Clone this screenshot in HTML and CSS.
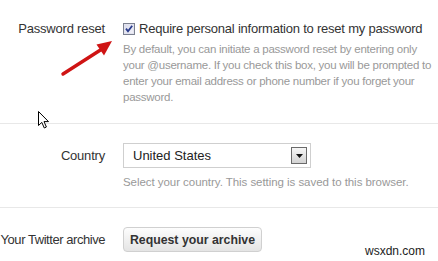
FILE: index.html
```html
<!DOCTYPE html>
<html>
<head>
<meta charset="utf-8">
<link rel="stylesheet" href="styles.css">
</head>
<body>
<div class="settings">
  <div class="row row-reset">
    <div class="label"><span>Password reset</span></div>
    <div class="field">
      <label class="check">
        <svg class="checkbox" width="12" height="12" viewBox="0 0 12 12">
          <defs>
            <linearGradient id="cbg" x1="0" y1="0" x2="1" y2="1">
              <stop offset="0" stop-color="#d6d8ea"/>
              <stop offset="1" stop-color="#f4f4fb"/>
            </linearGradient>
          </defs>
          <rect x="0.5" y="0.5" width="11" height="11" fill="url(#cbg)" stroke="#7b8090"/>
          <rect x="1.5" y="1.5" width="9" height="9" fill="none" stroke="#e2e3ee"/>
          <path d="M3 5.6 L5 8.2 L9.2 2.8" fill="none" stroke="#2a3c8c" stroke-width="1.8"/>
        </svg>
        <span>Require personal information to reset my password</span>
      </label>
      <p class="help help-wide">By default, you can initiate a password reset by entering only your @username. If you check this box, you will be prompted to enter your email address or phone number if you forget your password.</p>
    </div>
  </div>
  <div class="row row-country">
    <div class="label"><span>Country</span></div>
    <div class="field">
      <div class="select">
        <span>United States</span>
        <span class="select-btn">
          <svg width="7" height="4" viewBox="0 0 7 4"><path d="M0 0 H7 L3.5 4 Z" fill="#111"/></svg>
        </span>
      </div>
      <p class="help">Select your country. This setting is saved to this browser.</p>
    </div>
  </div>
  <div class="row row-archive">
    <div class="label label-tight"><span>Your Twitter archive</span></div>
    <div class="field">
      <button class="btn">Request your archive</button>
    </div>
  </div>
</div>

<svg class="red-arrow" width="120" height="80" viewBox="0 0 120 80">
  <line x1="63" y1="74" x2="102" y2="49" stroke="#cf1414" stroke-width="3.4" stroke-linecap="round"/>
  <polygon points="112,41 96.5,44.5 104,55.5" fill="#cf1414"/>
</svg>

<svg class="cursor" width="12" height="19" viewBox="0 0 12 19">
  <path d="M0.5 0.5 L0.5 14.5 L3.8 11.4 L6.3 17 L8.4 16 L6 10.6 L10.5 10.6 Z" fill="#fff" stroke="#000" stroke-width="1" stroke-linejoin="miter"/>
</svg>

<div class="watermark">wsxdn.com</div>
</body>
</html>
```

FILE: styles.css
```css
html, body {
  margin: 0;
  padding: 0;
  background: #fff;
}

body {
  width: 438px;
  height: 261px;
  overflow: hidden;
  position: relative;
  font-family: "Liberation Sans", Arial, sans-serif;
  color: #333;
}

.settings {
  display: flex;
  flex-direction: column;
}

.row {
  display: flex;
  gap: 18px;
  border-bottom: 1px solid #e8e8e8;
}

.row-reset {
  padding: 20px 0 18px;
}

.row-country {
  padding: 19px 0 17px;
}

.row-archive {
  padding: 19px 0 0;
  border-bottom: none;
}

.label {
  width: 105px;
  flex: none;
  display: flex;
  justify-content: flex-end;
  white-space: nowrap;
  font-size: 13px;
  letter-spacing: -0.2px;
  color: #333;
}

.label-tight {
  letter-spacing: -0.45px;
}

.row-reset .label {
  line-height: 18px;
}

.row-country .label,
.row-archive .label {
  line-height: 25px;
}

.field {
  display: flex;
  flex-direction: column;
}

.check {
  display: flex;
  align-items: center;
  gap: 4px;
  font-size: 13px;
  letter-spacing: -0.22px;
  line-height: 18px;
  color: #333;
  white-space: nowrap;
}

.checkbox {
  flex: none;
  display: block;
}

.help {
  margin: 3px 0 0;
  font-size: 11.5px;
  letter-spacing: -0.25px;
  line-height: 16px;
  color: #999;
}

.help-wide {
  width: 312px;
}

.row-country .help {
  margin-top: 6px;
  letter-spacing: -0.05px;
}

.select {
  box-sizing: border-box;
  width: 188px;
  height: 25px;
  border: 1px solid #cfcfcf;
  background: #fff;
  display: flex;
  align-items: center;
  justify-content: space-between;
  padding: 0 3px 0 9px;
  font-size: 13px;
  color: #222;
}

.select-btn {
  box-sizing: border-box;
  width: 16px;
  height: 17px;
  border: 1px solid #6a6a6a;
  background: linear-gradient(#f6f6f6, #d2d2d2);
  display: flex;
  align-items: center;
  justify-content: center;
}

.select-btn svg {
  display: block;
}

.btn {
  box-sizing: border-box;
  height: 25px;
  width: 139px;
  padding: 0;
  border: 1px solid #d0d0d0;
  border-radius: 4px;
  background: linear-gradient(#fdfdfd, #e4e4e4);
  font-family: "Liberation Sans", Arial, sans-serif;
  font-weight: bold;
  font-size: 12.3px;
  color: #333;
  text-align: center;
}

.red-arrow {
  position: absolute;
  left: 0;
  top: 0;
}

.cursor {
  position: absolute;
  left: 38px;
  top: 111px;
}

.watermark {
  position: absolute;
  left: 365px;
  top: 243px;
  font-size: 12px;
  line-height: 16px;
  color: #222;
}
```
